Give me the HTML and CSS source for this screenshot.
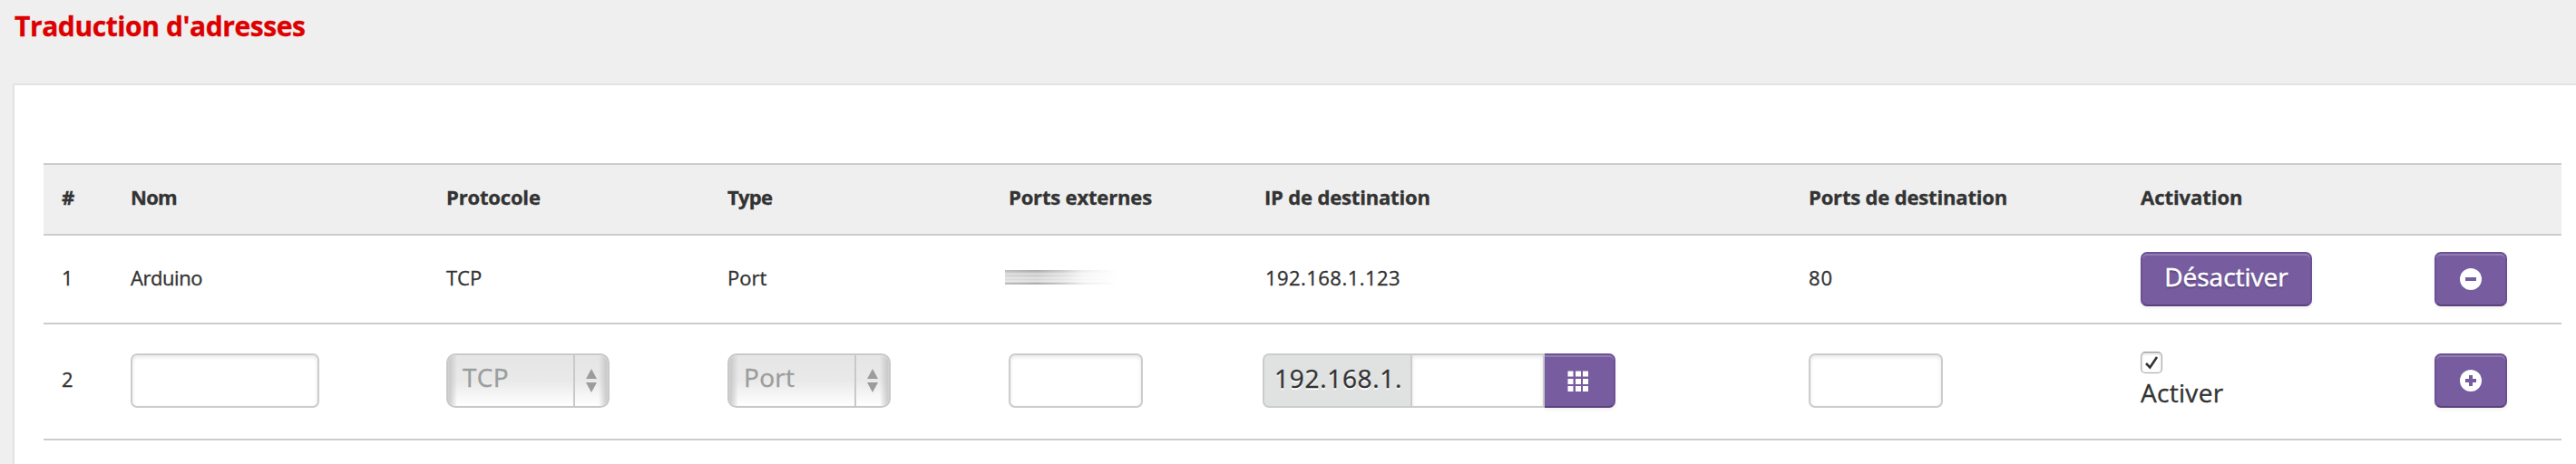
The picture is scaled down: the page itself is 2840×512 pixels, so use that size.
FILE: index.html
```
<!DOCTYPE html>
<html lang="fr">
<head>
<meta charset="utf-8">
<title>Traduction d'adresses</title>
<link rel="stylesheet" href="styles.css">
</head>
<body>
<h1 class="title">Traduction d'adresses</h1>
<section class="panel">
  <div class="table">
    <div class="row row-head">
      <div class="cell">#</div>
      <div class="cell short">Nom</div>
      <div class="cell">Protocole</div>
      <div class="cell short">Type</div>
      <div class="cell">Ports externes</div>
      <div class="cell ip-head">IP de destination</div>
      <div class="cell">Ports de destination</div>
      <div class="cell last-head">Activation</div>
      <div class="cell"></div>
    </div>
    <div class="row row-rule">
      <div class="cell num">1</div>
      <div class="cell name">Arduino</div>
      <div class="cell">TCP</div>
      <div class="cell">Port</div>
      <div class="cell"><div class="redacted"></div></div>
      <div class="cell ip">192.168.1.123</div>
      <div class="cell port">80</div>
      <div class="cell control"><button class="btn btn-text">Désactiver</button></div>
      <div class="cell control"><button class="btn btn-icon" aria-label="Supprimer">
        <svg class="icon" viewBox="0 0 24 24"><circle cx="12" cy="12" r="12" fill="#fff"/><path d="M6 12h12" stroke="#775ca0" stroke-width="4"/></svg>
      </button></div>
    </div>
    <div class="row row-new">
      <div class="cell">2</div>
      <div class="cell control"><input class="input input-name" type="text" aria-label="Nom"></div>
      <div class="cell control">
        <div class="select"><span class="select-value">TCP</span><span class="select-arrows"><svg class="arrows" viewBox="0 0 12 26"><path d="M6 0l6 11H0zM0 15h12L6 26z" fill="#9b9d9d"/></svg></span></div>
      </div>
      <div class="cell control">
        <div class="select"><span class="select-value">Port</span><span class="select-arrows"><svg class="arrows" viewBox="0 0 12 26"><path d="M6 0l6 11H0zM0 15h12L6 26z" fill="#9b9d9d"/></svg></span></div>
      </div>
      <div class="cell control"><input class="input input-port" type="text" aria-label="Ports externes"></div>
      <div class="cell control">
        <div class="ip-group">
          <span class="addon">192.168.1.</span>
          <input class="input input-ip" type="text" aria-label="IP de destination">
          <button class="btn btn-grid" aria-label="Choisir">
            <svg class="icon" viewBox="0 0 24 24" fill="#fff"><path d="M.5.5h6v6h-6zM9 .5h6v6H9zM17 .5h6v6h-6zM.5 9h6v6h-6zM9 9h6v6H9zM17 9h6v6h-6zM.5 17h6v6h-6zM9 17h6v6H9zM17 17h6v6h-6z"/></svg>
          </button>
        </div>
      </div>
      <div class="cell control"><input class="input input-port" type="text" aria-label="Ports de destination"></div>
      <div class="cell check-cell">
        <label class="check">
          <span class="box"><svg class="tick" viewBox="0 0 24 24"><path d="M6 13l4.300 4.500L18 6" fill="none" stroke="#333" stroke-width="2.600"/></svg></span>
          <span class="check-label">Activer</span>
        </label>
      </div>
      <div class="cell control"><button class="btn btn-icon" aria-label="Ajouter">
        <svg class="icon" viewBox="0 0 24 24"><circle cx="12" cy="12" r="12" fill="#fff"/><path d="M6 12h12M12 6v12" stroke="#775ca0" stroke-width="4"/></svg>
      </button></div>
    </div>
  </div>
</section>
</body>
</html>
```
FILE: styles.css
```
* { box-sizing: border-box; }
body {
  margin: 0;
  height: 512px;
  overflow: hidden;
  background: #efefef;
  color: #333;
  font: 22px/40px "Open Sans", sans-serif;
  -webkit-text-stroke-width: .35px;
  display: flex;
  flex-direction: column;
}
.title {
  margin: 0;
  padding: 9px 0 0 16px;
  height: 92px;
  flex: none;
  color: #d00;
  font-size: 30px;
  font-weight: 700;
  line-height: 40px;
  letter-spacing: -0.42px;
}
.panel {
  flex: 1;
  margin-left: 14px;
  padding: 86px 16px 0 32px;
  background: #fff;
  border: solid #e2e2e2;
  border-width: 2px 0 0 2px;
}
.row {
  display: grid;
  grid-template-columns: 76px 348px 310px 310px 280px 602px 366px 324px 160px;
  border-bottom: 2px solid #ccc;
}
.cell { padding-left: 20px; white-space: nowrap; }
.row-head {
  height: 80px;
  padding-top: 16px;
  border-top: 2px solid #ccc;
  background: #efefef;
  font-weight: 700;
  letter-spacing: -0.17px;
}
.row-head .cell { margin-top: -1px; }
.short { letter-spacing: -0.7px; }
.ip-head { padding-left: 22px; }
.last-head { letter-spacing: -0.05px; }
.row-rule { height: 98px; padding-top: 18px; }
.row-rule .cell:not(.control) { padding-top: 8px; }
.name { letter-spacing: -0.45px; }
.ip { padding-left: 23px; letter-spacing: 0.45px; }
.port { letter-spacing: 1px; }
.row-new { height: 128px; padding-top: 32px; }
.row-new > .cell:first-child { padding-top: 8px; }
.control { display: flex; align-items: flex-start; }
.input {
  height: 60px;
  padding: 0 12px;
  border: 2px solid #ccc;
  border-radius: 7px;
  background: #fff;
  box-shadow: inset 0 2px 4px rgba(0, 0, 0, .1);
  color: #333;
  font: 28px "Open Sans", sans-serif;
}
.input-name { width: 208px; }
.input-port { width: 148px; }
.select {
  display: flex;
  width: 180px;
  height: 60px;
  border: 2px solid #c9c9c9;
  border-radius: 10px;
  background:
    linear-gradient(90deg, #c4c4c4, rgba(196, 196, 196, 0) 10px, rgba(196, 196, 196, 0) calc(100% - 10px), #c4c4c4),
    linear-gradient(#e5e5e5, #e9e9e9 50%, #fff);
  box-shadow: inset 0 0 2px #eee;
  color: #9b9d9d;
  font-size: 28px;
  line-height: 48px;
}
.select-value { width: 138px; padding-left: 16px; letter-spacing: .3px; }
.select-arrows {
  flex: 1;
  padding: 15px 0 0 12px;
  border-left: 2px solid #c9c9c9;
}
.arrows { display: block; width: 12px; height: 26px; }
.ip-group { display: flex; }
.addon {
  width: 165px;
  height: 60px;
  padding-left: 11px;
  border: 2px solid #ccc;
  border-radius: 7px 0 0 7px;
  background: #e0e2e1;
  font-size: 28px;
  line-height: 50px;
  letter-spacing: .7px;
  text-shadow: 0 2px 0 #fff;
}
.input-ip { width: 148px; margin-left: -2px; border-radius: 0; }
.btn {
  display: flex;
  justify-content: center;
  height: 60px;
  padding: 0;
  border: 2px solid;
  border-color: #6d5295 #6b5093 #5b427c;
  border-radius: 7px;
  background: #775ca0;
  box-shadow: inset 0 2px 0 rgba(255, 255, 255, .2), 0 2px 4px rgba(0, 0, 0, .06);
  color: #fff;
  font: 28px/50px "Open Sans", sans-serif;
  -webkit-text-stroke-width: .5px;
}
.btn-text { width: 189px; text-shadow: 0 2px 2px rgba(0, 0, 0, .25); }
.btn-icon, .btn-grid { align-items: center; width: 80px; }
.btn-grid { width: 78px; border-left: 0; border-radius: 0 7px 7px 0; padding-right: 2px; padding-top: 2px; }
.icon { display: block; width: 24px; height: 24px; }
.redacted {
  width: 124px;
  height: 16px;
  margin: 12px 0 0 -4px;
  background: linear-gradient(#aaa, #b4b4b4 12%, #dedede 26%, #c8c8c8 40%, #e4e4e4 54%, #d2d2d2 64%, #e8e8e8 80%, #999 94%, #ccc);
  -webkit-mask-image: linear-gradient(90deg, rgba(0, 0, 0, .8), #000 28%, rgba(0, 0, 0, .65) 50%, rgba(0, 0, 0, .2) 70%, transparent);
  mask-image: linear-gradient(90deg, rgba(0, 0, 0, .8), #000 28%, rgba(0, 0, 0, .65) 50%, rgba(0, 0, 0, .2) 70%, transparent);
}
.check-cell { margin-top: -2px; }
.check { display: flex; flex-direction: column; align-items: flex-start; }
.box {
  width: 24px;
  height: 24px;
  border: 1.5px solid #aaa;
  border-top-color: #999;
  border-radius: 5px;
  background: #fff;
  box-shadow: inset 0 1px 3px rgba(0, 0, 0, .25);
}
.tick { display: block; width: 24px; height: 24px; margin: -1px; }
.check-label { margin-top: 1px; font-size: 28px; letter-spacing: .3px; }
```
